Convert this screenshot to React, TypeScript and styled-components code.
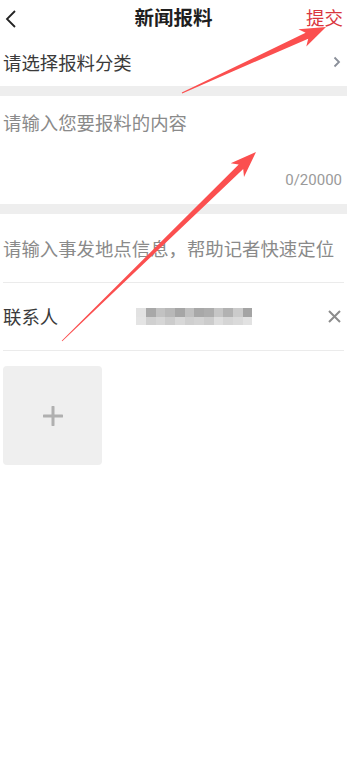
import React from "react";
import styled, { createGlobalStyle } from "styled-components";

const GlobalStyle = createGlobalStyle`
  html, body {
    margin: 0;
    padding: 0;
    background: #ffffff;
  }
  body {
    font-family: "Noto Sans CJK SC", "Noto Sans", Roboto, sans-serif;
  }
`;

const Page = styled.div`
  position: relative;
  width: 347px;
  min-height: 760px;
  background: #fff;
  overflow: hidden;
`;

const Header = styled.header`
  height: 38px;
  display: grid;
  grid-template-columns: 60px 1fr 60px;
  align-items: center;
`;

const BackButton = styled.button`
  border: none;
  background: none;
  padding: 0 0 0 4px;
  display: flex;
  align-items: center;
  height: 100%;
`;

const Title = styled.h1`
  margin: 0;
  text-align: center;
  font-size: 19.5px;
  font-weight: 700;
  color: #1f1f1f;
  line-height: 1;
  margin-top: -4px;
`;

const SubmitLink = styled.a`
  justify-self: end;
  padding-right: 4px;
  font-size: 18.5px;
  color: #d9363e;
  line-height: 1;
  margin-top: -4px;
`;

const Row = styled.div<{ height: number }>`
  height: ${({ height }) => height}px;
  display: flex;
  align-items: center;
  justify-content: space-between;
  padding: 0 6px 0 3px;
`;

const RowLabel = styled.span<{ muted?: boolean }>`
  font-size: 18.4px;
  color: ${({ muted }) => (muted ? "#8a8a8a" : "#3a3a3a")};
  line-height: 1;
  white-space: nowrap;
`;

const Band = styled.div`
  height: 10px;
  background: #eeeeee;
`;

const Divider = styled.div`
  height: 1px;
  background: #ebebeb;
  margin: 0 3px;
`;

const ContentArea = styled.div`
  height: 108px;
  padding: 17px 5px 0 3px;
  box-sizing: border-box;
  display: flex;
  flex-direction: column;
`;

const Counter = styled.span`
  margin-top: auto;
  margin-bottom: 16px;
  align-self: flex-end;
  font-family: Roboto, "Noto Sans", sans-serif;
  font-size: 15px;
  color: #9a9a9a;
  line-height: 1;
`;

const ContactLeft = styled.div`
  display: flex;
  align-items: center;
`;

const Mosaic = styled.div`
  margin-left: 78px;
  display: grid;
  grid-template-columns: repeat(12, 9.7px);
  grid-template-rows: 9px 8px;
`;

const Cell = styled.span<{ shade: string }>`
  background: ${({ shade }) => shade};
`;

const UploadSection = styled.div`
  padding: 15px 3px;
`;

const UploadBox = styled.div`
  width: 99px;
  height: 99px;
  border-radius: 4px;
  background: #efefef;
  display: flex;
  align-items: center;
  justify-content: center;
`;

const Overlay = styled.svg`
  position: absolute;
  left: 0;
  top: 0;
  pointer-events: none;
`;

const topShades = ["#e2e2e2", "#a8a8a8", "#c2c2c2", "#b8b8b8", "#a6a6a6", "#c0c0c0", "#a8a8a8", "#adadad", "#c6c6c6", "#b2b2b2", "#cbcbcb", "#a4a4a4"];
const bottomShades = ["#e4e4e4", "#d0d0d0", "#d6d6d6", "#cccccc", "#d8d8d8", "#cfcfcf", "#d3d3d3", "#cccccc", "#dedede", "#d5d5d5", "#dadada", "#e2e2e2"];

// annotation arrow: tapered shaft with a triangular head
const arrowPoints = (tx: number, ty: number, hx: number, hy: number) => {
  const dx = hx - tx;
  const dy = hy - ty;
  const len = Math.hypot(dx, dy);
  const ux = dx / len;
  const uy = dy / len;
  const nx = -uy;
  const ny = ux;
  const headLen = 26;
  const headHalf = 9.5;
  const neck = 21;
  const shaftHalf = 3.2;
  const bx = hx - ux * headLen;
  const by = hy - uy * headLen;
  const sx = hx - ux * neck;
  const sy = hy - uy * neck;
  const pts = [
    [tx + nx * 0.4, ty + ny * 0.4],
    [sx + nx * shaftHalf, sy + ny * shaftHalf],
    [bx + nx * headHalf, by + ny * headHalf],
    [hx, hy],
    [bx - nx * headHalf, by - ny * headHalf],
    [sx - nx * shaftHalf, sy - ny * shaftHalf],
    [tx - nx * 0.4, ty - ny * 0.4],
  ];
  return pts.map((p) => `${p[0].toFixed(1)},${p[1].toFixed(1)}`).join(" ");
};

const App: React.FC = () => {
  return (
    <Page>
      <GlobalStyle />
      <Header>
        <BackButton>
          <svg width="14" height="20" viewBox="0 0 14 20">
            <path d="M11 2 L3 10 L11 18" fill="none" stroke="#222" strokeWidth="1.8" />
          </svg>
        </BackButton>
        <Title>新闻报料</Title>
        <SubmitLink>提交</SubmitLink>
      </Header>

      <Row height={48}>
        <RowLabel>请选择报料分类</RowLabel>
        <svg width="8" height="12" viewBox="0 0 8 12">
          <path d="M1.5 1.5 L6 6 L1.5 10.5" fill="none" stroke="#8a8f99" strokeWidth="1.8" />
        </svg>
      </Row>

      <Band />

      <ContentArea>
        <RowLabel muted>请输入您要报料的内容</RowLabel>
        <Counter>0/20000</Counter>
      </ContentArea>

      <Band />

      <Row height={68}>
        <RowLabel muted>请输入事发地点信息，帮助记者快速定位</RowLabel>
      </Row>
      <Divider />

      <Row height={67}>
        <ContactLeft>
          <RowLabel>联系人</RowLabel>
          <Mosaic>
            {topShades.map((c, i) => (
              <Cell key={"t" + i} shade={c} />
            ))}
            {bottomShades.map((c, i) => (
              <Cell key={"b" + i} shade={c} />
            ))}
          </Mosaic>
        </ContactLeft>
        <svg width="13" height="13" viewBox="0 0 13 13">
          <path d="M1 1 L12 12 M12 1 L1 12" stroke="#8c8c8c" strokeWidth="2" />
        </svg>
      </Row>
      <Divider />

      <UploadSection>
        <UploadBox>
          <svg width="20" height="20" viewBox="0 0 20 20">
            <path d="M10 1 V19 M1 10 H19" stroke="#b0b0b0" strokeWidth="3" strokeLinecap="round" />
          </svg>
        </UploadBox>
      </UploadSection>

      <Overlay width="347" height="760" viewBox="0 0 347 760">
        <polygon points={arrowPoints(182, 93, 326, 27)} fill="#fb4f4f" />
        <polygon points={arrowPoints(62, 341, 256, 152)} fill="#fb4f4f" />
      </Overlay>
    </Page>
  );
};

export default App;
